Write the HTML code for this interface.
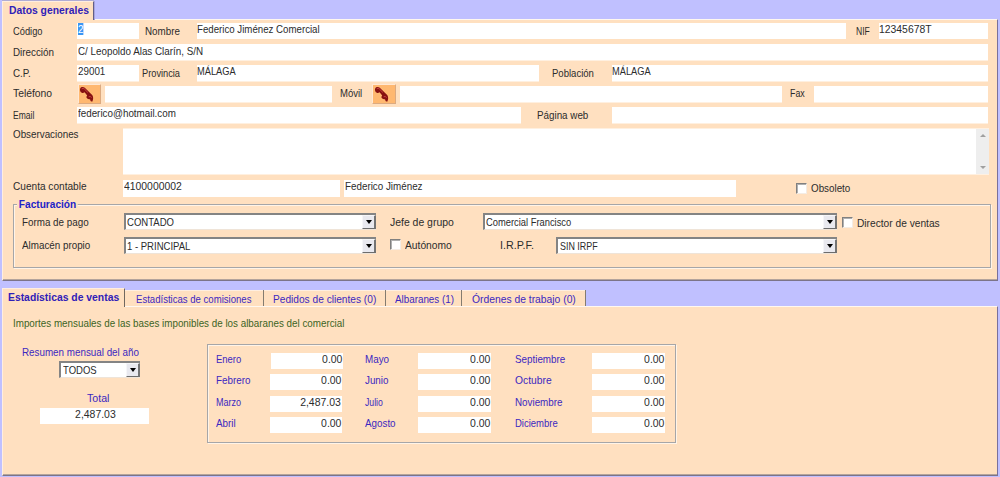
<!DOCTYPE html>
<html><head><meta charset="utf-8">
<style>
*{box-sizing:border-box;margin:0;padding:0}
html,body{width:1000px;height:477px;overflow:hidden}
body{background:#c0c0ff;font-family:"Liberation Sans",sans-serif;font-size:11px;color:#282828;position:relative}
.a{position:absolute}
.l{position:absolute;white-space:nowrap;height:14px;line-height:14px;color:#2c2c2c;transform:scaleX(var(--s,.893));transform-origin:0 50%}
.bl{color:#3c28c0}
.bd{font-weight:bold;--s:.955}
.i{position:absolute;background:#fff;height:16px;line-height:13px;padding-left:1px;white-space:nowrap;overflow:hidden;color:#2c2c2c}
.i span,.cb span{display:inline-block;transform:scaleX(var(--s,.893));transform-origin:0 50%}
.h{box-shadow:0 1px 0 #fff0e0}
.r{text-align:right;padding-right:1px}
.i.r span{transform-origin:100% 50%}
.c{text-align:center}
.n{--s:.95}
.cb{--s:.866}
.i.c span{transform-origin:50% 50%}
.panel{position:absolute;background:#ffe0c0}
.cb{position:absolute;background:#fff;height:17px;border:2px solid #848484;border-right:0;border-bottom:1px solid #efe4d8;line-height:14px;padding-left:2px;color:#2c2c2c;white-space:nowrap}
.cb span{position:relative;top:0px}
.cb::after{content:"";box-sizing:border-box;position:absolute;right:0;top:0;width:14px;height:14px;background:#e9e9ef;border:1px solid #f6f6f8;border-right:2px solid #747474;border-bottom:1px solid #6c6c6c}
.cb::before{content:"";box-sizing:border-box;position:absolute;right:4px;top:5px;width:0;height:0;border:3.5px solid transparent;border-top:4px solid #000;border-bottom:0;z-index:2}
.ck{position:absolute;width:11px;height:11px;background:#fff;border:1px solid #808080;border-right-color:#f4ece4;border-bottom-color:#f4ece4;box-shadow:inset 1px 1px 0 #b0b0b0}
.gb{position:absolute;border:1px solid #a6a6a8;box-shadow:1px 1px 0 #fff4e8, inset 1px 1px 0 #fff4e8}
.btn{position:absolute;width:23px;height:20px;background:#ffb870;border:1px solid #ffe8d4;border-right-color:#dcaa80;border-bottom-color:#dcaa80}
.btn svg{position:absolute;left:0;top:1px}
.sep{position:absolute;width:1px;background:#847c70}
</style></head><body>

<!-- top panel -->
<div class="panel" style="left:2px;top:19px;width:996px;height:262px;border-top:1px solid #fff8f0;border-left:1px solid #ffeee0;border-right:1px solid #78709c;border-bottom:1px solid #7c7488;box-shadow:inset 0 -1px 0 #b4a49c"></div>
<div class="panel" style="left:2px;top:1px;width:92px;height:19px;border-left:1px solid #ffeee0;border-top:1px solid #ffeee0;border-right:1px solid #625e86;box-shadow:0 -1px 0 #b0acd4,1px 0 0 #a8a4dc"></div>
<div class="l bl bd" style="left:9px;top:3px;color:#3020b8;--s:.94">Datos generales</div>

<div class="l" style="left:13px;top:24px;--s:0.846">Código</div>
<div class="i" style="left:77px;top:23px;width:62px"><span><b style="font-weight:normal;background:#3a96f5;color:#fff">2</b></span></div>
<div class="l" style="left:145px;top:24px">Nombre</div>
<div class="i" style="left:197px;top:23px;width:649px;padding-left:0;--s:0.88"><span>Federico Jiménez Comercial</span></div>
<div class="l" style="left:856px;top:24px;--s:0.78">NIF</div>
<div class="i" style="left:879px;top:23px;width:109px;padding-left:0;--s:0.944"><span>12345678T</span></div>

<div class="l" style="left:13px;top:45px">Dirección</div>
<div class="i h" style="left:77px;top:44px;width:911px;line-height:15px"><span>C/ Leopoldo Alas Clarín, S/N</span></div>

<div class="l" style="left:13px;top:66px">C.P.</div>
<div class="i h" style="left:77px;top:65px;width:62px"><span>29001</span></div>
<div class="l" style="left:142px;top:66px;--s:0.84">Provincia</div>
<div class="i h" style="left:197px;top:65px;width:342px;padding-left:0;--s:0.843"><span>MÁLAGA</span></div>
<div class="l" style="left:552px;top:66px;--s:0.867">Población</div>
<div class="i h" style="left:612px;top:65px;width:376px;padding-left:0;--s:.843"><span>MÁLAGA</span></div>

<div class="l" style="left:13px;top:86px;--s:0.94">Teléfono</div>
<div class="btn" style="left:78px;top:84px"><svg width="21" height="17" viewBox="0 0 21 17"><path d="M2 1.3Q4 .3 5.8 1.8L9.6 5.4L13.4 9.2Q15 12 13.2 15.8L11.4 15Q11.8 13.6 10.8 13.2Q8.6 13.6 7.5 11.8Q7.2 10.4 8.2 9.6L5.6 6.2Q4.6 7.2 3.2 7Q1.2 6.2.9 3.9Q.9 2.3 2 1.3Z" fill="#861010"/><path d="M3 2.6Q4.2 1.8 5.4 3L8.6 6.2M10 10.6Q11.2 9.8 12.4 11.2" stroke="#c44040" stroke-width="1" fill="none" stroke-linecap="round"/></svg></div>
<div class="i h" style="left:105px;top:86px;width:227px"></div>
<div class="l" style="left:340px;top:86px;--s:.866">Móvil</div>
<div class="btn" style="left:372px;top:84px;width:24px"><svg style="left:1px" width="21" height="17" viewBox="0 0 21 17"><path d="M2 1.3Q4 .3 5.8 1.8L9.6 5.4L13.4 9.2Q15 12 13.2 15.8L11.4 15Q11.8 13.6 10.8 13.2Q8.6 13.6 7.5 11.8Q7.2 10.4 8.2 9.6L5.6 6.2Q4.6 7.2 3.2 7Q1.2 6.2.9 3.9Q.9 2.3 2 1.3Z" fill="#861010"/><path d="M3 2.6Q4.2 1.8 5.4 3L8.6 6.2M10 10.6Q11.2 9.8 12.4 11.2" stroke="#c44040" stroke-width="1" fill="none" stroke-linecap="round"/></svg></div>
<div class="i h" style="left:400px;top:86px;width:382px"></div>
<div class="l" style="left:790px;top:86px;--s:0.8">Fax</div>
<div class="i h" style="left:814px;top:86px;width:174px"></div>

<div class="l" style="left:13px;top:108px;--s:0.775">Email</div>
<div class="i h" style="left:77px;top:107px;width:444px"><span>federico@hotmail.com</span></div>
<div class="l" style="left:537px;top:108px">Página web</div>
<div class="i h" style="left:612px;top:107px;width:376px"></div>

<div class="l" style="left:13px;top:127px">Observaciones</div>
<div class="i" style="left:123px;top:128px;width:866px;height:46px;box-shadow:0 1px 0 #fff0e0;border-top:1px solid #fff0e0"></div>
<div class="a" style="left:976px;top:129px;width:13px;height:45px;background:#eeeeee"></div>
<div class="a" style="left:980px;top:134px;border:3px solid transparent;border-bottom:3px solid #a0a0a0;border-top:0"></div>
<div class="a" style="left:980px;top:166px;border:3px solid transparent;border-top:3px solid #a0a0a0;border-bottom:0"></div>

<div class="l" style="left:13px;top:179px;--s:0.918">Cuenta contable</div>
<div class="i" style="left:123px;top:180px;width:217px;height:17px;--s:0.944"><span>4100000002</span></div>
<div class="i" style="left:344px;top:180px;width:392px;height:17px"><span>Federico Jiménez</span></div>
<div class="ck" style="left:796px;top:183px"></div>
<div class="l" style="left:811px;top:181px">Obsoleto</div>

<div class="gb" style="left:13px;top:204px;width:978px;height:64px"></div>
<div class="l bl bd" style="left:17px;top:197px;background:#ffe0c0;padding:0 2px;color:#2222c8;--s:.92">Facturación</div>

<div class="l" style="left:22px;top:215px">Forma de pago</div>
<div class="cb" style="left:124px;top:213px;width:252px;padding-left:1px"><span>CONTADO</span></div>
<div class="l" style="left:390px;top:215px;--s:0.948">Jefe de grupo</div>
<div class="cb" style="left:483px;top:213px;width:354px;padding-left:1px;--s:0.85"><span>Comercial Francisco</span></div>
<div class="ck" style="left:842px;top:217px"></div>
<div class="l" style="left:857px;top:216px;--s:0.926">Director de ventas</div>

<div class="l" style="left:22px;top:238px">Almacén propio</div>
<div class="cb" style="left:124px;top:237px;width:252px;padding-left:1px"><span>1 - PRINCIPAL</span></div>
<div class="ck" style="left:390px;top:239px"></div>
<div class="l" style="left:405px;top:238px;--s:0.933">Autónomo</div>
<div class="l" style="left:500px;top:238px;--s:0.98">I.R.P.F.</div>
<div class="cb" style="left:556px;top:237px;width:281px;--s:0.81"><span>SIN IRPF</span></div>

<!-- bottom panel -->
<div class="panel" style="left:2px;top:306px;width:996px;height:170px;border-top:1px solid #fff8f0;border-left:1px solid #ffeee0;border-right:1px solid #78709c;border-bottom:1px solid #7c7488;box-shadow:inset 0 -1px 0 #b4a49c"></div>
<div class="panel" style="left:125px;top:290px;width:461px;height:16px;border-top:1px solid #ffeee0"></div>
<div class="panel" style="left:2px;top:288px;width:123px;height:19px;border-left:1px solid #ffeee0;border-top:1px solid #ffeee0;border-right:1px solid #706860"></div>
<div class="l bl bd" style="left:8px;top:290px;color:#3020b8;--s:.942">Estadísticas de ventas</div>
<div class="sep" style="left:263px;top:290px;height:16px"></div>
<div class="sep" style="left:385px;top:290px;height:16px"></div>
<div class="sep" style="left:461px;top:290px;height:16px"></div>
<div class="sep" style="left:585px;top:290px;height:16px"></div>
<div class="l bl" style="left:136px;top:292px;--s:0.87">Estadísticas de comisiones</div>
<div class="l bl" style="left:273px;top:292px;--s:0.923">Pedidos de clientes (0)</div>
<div class="l bl" style="left:395px;top:292px">Albaranes (1)</div>
<div class="l bl" style="left:472px;top:292px;--s:0.938">Órdenes de trabajo (0)</div>

<div class="l" style="left:13px;top:316px;color:#3c6424">Importes mensuales de las bases imponibles de los albaranes del comercial</div>

<div class="l bl" style="left:22px;top:345px">Resumen mensual del año</div>
<div class="cb" style="left:59px;top:361px;width:81px"><span>TODOS</span></div>
<div class="l bl" style="left:87px;top:391px;--s:0.965">Total</div>
<div class="i c n" style="left:40px;top:408px;width:109px"><span>2,487.03</span></div>

<div class="gb" style="left:207px;top:344px;width:469px;height:99px"></div>

<div class="l bl" style="left:216px;top:352px;--s:0.86">Enero</div><div class="i r n" style="left:271px;top:353px;width:72px"><span>0.00</span></div>
<div class="l bl" style="left:216px;top:373px">Febrero</div><div class="i r n" style="left:270px;top:374px;width:72px"><span>0.00</span></div>
<div class="l bl" style="left:216px;top:395px;--s:0.82">Marzo</div><div class="i r n" style="left:270px;top:396px;width:72px"><span>2,487.03</span></div>
<div class="l bl" style="left:216px;top:416px">Abril</div><div class="i r n" style="left:270px;top:417px;width:72px"><span>0.00</span></div>

<div class="l bl" style="left:365px;top:352px">Mayo</div><div class="i r n" style="left:418px;top:353px;width:73px"><span>0.00</span></div>
<div class="l bl" style="left:365px;top:373px">Junio</div><div class="i r n" style="left:418px;top:374px;width:73px"><span>0.00</span></div>
<div class="l bl" style="left:365px;top:395px;--s:0.79">Julio</div><div class="i r n" style="left:418px;top:396px;width:73px"><span>0.00</span></div>
<div class="l bl" style="left:365px;top:416px">Agosto</div><div class="i r n" style="left:418px;top:417px;width:73px"><span>0.00</span></div>

<div class="l bl" style="left:515px;top:352px">Septiembre</div><div class="i r n" style="left:592px;top:353px;width:73px"><span>0.00</span></div>
<div class="l bl" style="left:515px;top:373px;--s:0.936">Octubre</div><div class="i r n" style="left:592px;top:374px;width:73px"><span>0.00</span></div>
<div class="l bl" style="left:515px;top:395px">Noviembre</div><div class="i r n" style="left:592px;top:396px;width:73px"><span>0.00</span></div>
<div class="l bl" style="left:515px;top:416px;--s:0.863">Diciembre</div><div class="i r n" style="left:592px;top:417px;width:73px"><span>0.00</span></div>

</body></html>
